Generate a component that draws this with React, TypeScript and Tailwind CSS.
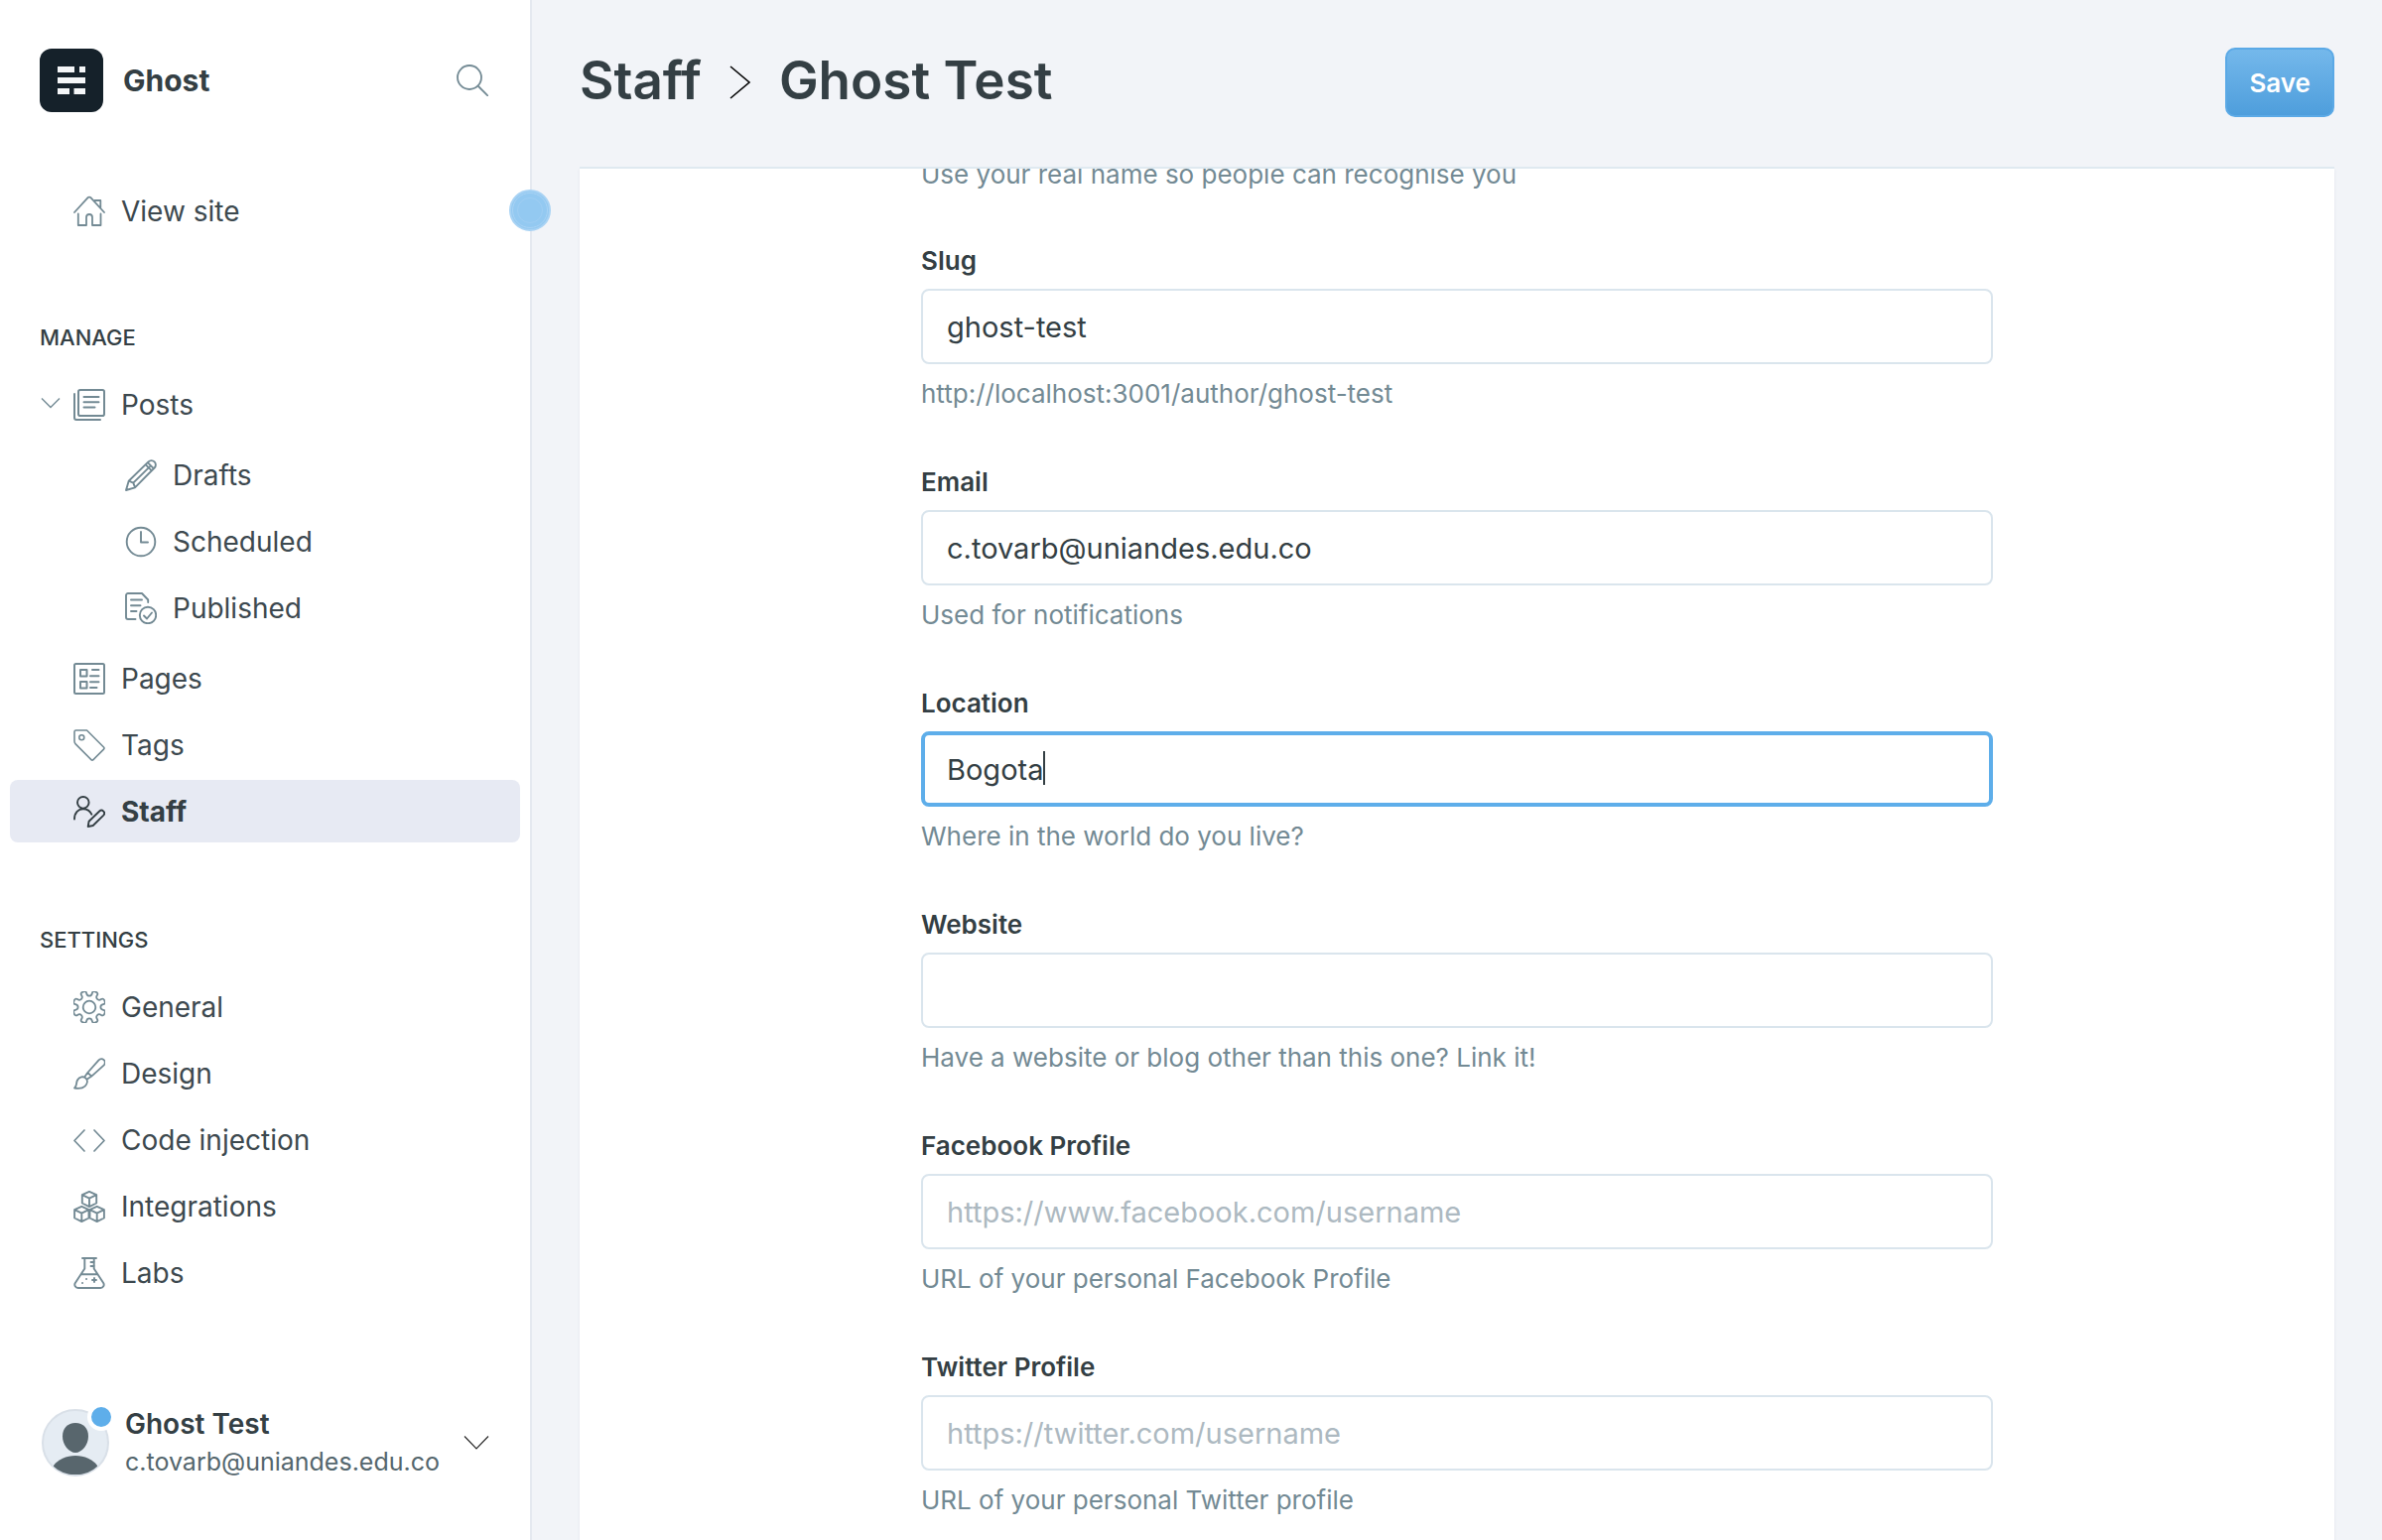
import React from "react";

type IconProps = { children: React.ReactNode; className?: string; width?: number };

function Icon({ children, className = "", width = 2 }: IconProps) {
  return (
    <svg
      viewBox="0 0 32 32"
      fill="none"
      stroke="currentColor"
      strokeWidth={width}
      strokeLinecap="round"
      strokeLinejoin="round"
      aria-hidden="true"
      className={`size-8 shrink-0 ${className}`}
    >
      {children}
    </svg>
  );
}

/** Closed, smoothed outline of an eight-toothed gear centred on 16,16. */
function gearPath() {
  const pts: [number, number][] = [];
  for (let i = 0; i < 8; i++) {
    const a = 22.5 + i * 45;
    for (const [off, r] of [[-11, 11.6], [-11, 17], [11, 17], [11, 11.6]] as const) {
      const t = ((a + off) * Math.PI) / 180;
      pts.push([16 + r * Math.cos(t), 16 + r * Math.sin(t)]);
    }
  }
  const mid = (p: [number, number], q: [number, number]) =>
    `${((p[0] + q[0]) / 2).toFixed(2)} ${((p[1] + q[1]) / 2).toFixed(2)}`;
  let d = `M${mid(pts[pts.length - 1], pts[0])}`;
  pts.forEach((p, i) => {
    d += `Q${p[0].toFixed(2)} ${p[1].toFixed(2)} ${mid(p, pts[(i + 1) % pts.length])}`;
  });
  return d + "Z";
}

const icons = {
  home: (
    <Icon width={1.8}>
      <path d="M1 17 14.600 2.200a1.900 1.900 0 0 1 2.800 0L31 17M4.800 18.500V30H13v-8a3 3 0 0 1 6 0v8h8.500V18.500M21.500 5H27.300v7.500" />
    </Icon>
  ),
  posts: (
    <Icon width={2}>
      <rect x="5" y="1" width="26" height="26" rx="1.800" />
      <path d="M1 5v24a2 2 0 0 0 2 2h24M10.500 8h15M10.500 13.300h15M10.500 18.600h11" />
    </Icon>
  ),
  drafts: (
    <Icon width={1.9}>
      <path d="M1 31l2.700-9.300L23.500 2.400a4.300 4.300 0 0 1 6.100 6.100L10 28.300zM3.700 21.700l4.600 1.900 1.700 4.700M8.300 23.600 24.800 7.400M20.600 5.200l6.200 6.200M22.800 3.200l6 6" />
    </Icon>
  ),
  scheduled: (
    <Icon width={1.9}>
      <circle cx="16" cy="16" r="14.300" />
      <path d="M16 6v10.500h7" />
    </Icon>
  ),
  published: (
    <Icon width={1.9}>
      <path d="M23.200 10V7.500L17 1H3a2 2 0 0 0-2 2v22a2 2 0 0 0 2 2h7.500M6 7.500h11M6 13.300h9.500M6 19h5.500" />
      <circle cx="23" cy="23" r="8.200" />
      <path d="m19 23.500 3 3 5-6" />
    </Icon>
  ),
  pages: (
    <Icon width={2}>
      <rect x="1" y="1" width="30" height="30" rx="1.500" />
      <path d="M7 7h6.500v6.500H7zM7 19h6.500v6.500H7zM19 7h6.500M17 13.300h8.500M17 19.300h8.500M17 25h6.500" />
    </Icon>
  ),
  tags: (
    <Icon width={1.6}>
      <path d="M2.500 1h11l17 17a1.500 1.500 0 0 1 0 2.100L20 30.600a1.500 1.500 0 0 1-2.100 0L2.200 14.900A4 4 0 0 1 1 12V2.500A1.500 1.500 0 0 1 2.500 1z" />
      <circle cx="8.300" cy="8.300" r="2.500" />
    </Icon>
  ),
  staff: (
    <Icon width={1.9}>
      <circle cx="9.800" cy="6.800" r="5.800" />
      <path d="M1 23.500C1 17 5 13.200 9.800 13.200c3.700 0 7 2.100 8.500 5.500M14.700 31l.9-5.300L26.200 15.500a2.900 2.900 0 0 1 4.100 4.100L19.700 30z" />
    </Icon>
  ),
  general: (
    <Icon width={1.8}>
      <path d={gearPath()} />
      <circle cx="16" cy="16" r="6.300" />
    </Icon>
  ),
  design: (
    <Icon width={1.8}>
      <path d="M1 30.500c2.800-1.800 1.300-4.500 3-8 1.800-3.600 6.200-4.300 8.700-1.700 2 2.300 1.300 5.500-1 7.800-2.600 2.400-6.200 2.700-10.700 1.900zM11.300 19.300l3-4.300L25.500 2.300a3.600 3.600 0 0 1 5.300 5L18.300 18.600l-4.300 3M14.300 15l4 3.600" />
    </Icon>
  ),
  code: (
    <Icon width={1.7}>
      <path d="M11 6 1 16.500 11 27M21 6l10 10.500L21 27" />
    </Icon>
  ),
  integrations: (
    <Icon width={1.9}>
      {[[16, 8.5], [8.3, 23.5], [23.7, 23.5]].map(([x, y]) => (
        <path
          key={x}
          transform={`translate(${x} ${y})`}
          d="M0-7.600 7.200-4.300V4L0 7.600-7.200 4v-8.300zM-7.200-4.300 0-.8l7.200-3.500M0-.8v8.400"
        />
      ))}
    </Icon>
  ),
  labs: (
    <Icon width={1.9}>
      <path d="M9 1h14M11.300 1v10.500L1.800 26a3.300 3.300 0 0 0 2.800 5h22.800a3.300 3.300 0 0 0 2.800-5l-9.500-14.500V1M8 17.300h16M17.500 5h3.500M17.500 9h3.500M21 21v4M19 23h4M13 22h.1M9 26h.1" />
    </Icon>
  ),
};

function NavItem({ icon, label, active, nested, arrow }: {
  icon: React.ReactNode;
  label: string;
  active?: boolean;
  nested?: boolean;
  arrow?: boolean;
}) {
  return (
    <li className="relative">
      {arrow && (
        <button type="button" aria-label="Collapse posts" className="absolute top-6 left-[31px] text-[#738a94]">
          <svg viewBox="0 0 20 12" fill="none" stroke="currentColor" strokeWidth="1.400" className="h-3 w-5">
            <path d="M1 1.500l9 9 9-9" />
          </svg>
        </button>
      )}
      <a
        href="#"
        aria-current={active ? "page" : undefined}
        className={`flex h-[63px] items-center gap-4 rounded-lg text-[28px] ${nested ? "pl-[116px]" : "pl-16"} ${
          active ? "bg-[#e7eaf3] font-bold text-[#343f44]" : "text-[#3d494f]"
        }`}
      >
        <span className={active ? "text-[#343f44]" : "text-[#738a94]"}>{icon}</span>
        {label}
      </a>
    </li>
  );
}

function Field({ id, label, hint, value, placeholder, focused }: {
  id: string;
  label: string;
  hint: string;
  value?: string;
  placeholder?: string;
  focused?: boolean;
}) {
  return (
    <div className="flex flex-col">
      <label htmlFor={id} className="mb-2.5 text-[26px] leading-9 font-semibold text-[#343f44]">
        {label}
      </label>
      <div className="relative">
        <input
          id={id}
          type="text"
          defaultValue={value}
          placeholder={placeholder}
          aria-describedby={`${id}-hint`}
          className={`block h-[76px] w-full rounded-lg bg-white text-[29px] text-[#343f44] outline-none placeholder:text-[#adb9c1] ${
            focused ? "border-4 border-[#5eaeea] px-[22px]" : "border-2 border-[#dae5ed] px-6"
          }`}
        />
        {focused && <span className="absolute top-5 left-[123px] h-[34px] w-0.5 bg-[#343f44]" />}
      </div>
      <p id={`${id}-hint`} className="mt-3 text-[26px] leading-9 text-[#738a94]">
        {hint}
      </p>
    </div>
  );
}

const fields = [
  { id: "slug", label: "Slug", value: "ghost-test", hint: "http://localhost:3001/author/ghost-test" },
  { id: "email", label: "Email", value: "c.tovarb@uniandes.edu.co", hint: "Used for notifications" },
  { id: "location", label: "Location", value: "Bogota", hint: "Where in the world do you live?", focused: true },
  { id: "website", label: "Website", hint: "Have a website or blog other than this one? Link it!" },
  { id: "facebook", label: "Facebook Profile", placeholder: "https://www.facebook.com/username", hint: "URL of your personal Facebook Profile" },
  { id: "twitter", label: "Twitter Profile", placeholder: "https://twitter.com/username", hint: "URL of your personal Twitter profile" },
];

function Sidebar() {
  return (
    <aside className="relative flex w-[536px] shrink-0 flex-col border-r-2 border-[#e5e9f0] bg-white">
      <header className="flex items-center pt-[49px] pr-[42px] pl-10">
        <svg viewBox="0 0 64 64" className="size-16" aria-hidden="true">
          <rect width="64" height="64" rx="12" fill="#15212a" />
          <path fill="#f4f6f8" d="M18 18h17v6H18zM40 18h6v6h-6zM18 29h28v6H18zM18 40h12v6H18zM34.500 40H46v6H34.500z" />
        </svg>
        <span className="ml-5 text-[30px] font-bold text-[#343f44]">Ghost</span>
        <button type="button" aria-label="Search" className="ml-auto text-[#738a94]">
          <Icon width={1.8}>
            <circle cx="13" cy="13" r="12" />
            <path d="m22 22 9.500 9.500" />
          </Icon>
        </button>
      </header>

      <nav className="px-2.5 pt-[68px]">
        <ul>
          <NavItem icon={icons.home} label="View site" />
        </ul>
        <h2 className="mt-20 px-[30px] text-[22px] leading-8 font-medium text-[#343f44]">MANAGE</h2>
        <ul className="mt-5 flex flex-col gap-1">
          <NavItem icon={icons.posts} label="Posts" arrow />
          <li className="py-1">
            <ul className="flex flex-col gap-1">
              <NavItem icon={icons.drafts} label="Drafts" nested />
              <NavItem icon={icons.scheduled} label="Scheduled" nested />
              <NavItem icon={icons.published} label="Published" nested />
            </ul>
          </li>
          <NavItem icon={icons.pages} label="Pages" />
          <NavItem icon={icons.tags} label="Tags" />
          <NavItem icon={icons.staff} label="Staff" active />
        </ul>
        <h2 className="mt-[82px] px-[30px] text-[22px] leading-8 font-medium text-[#343f44]">SETTINGS</h2>
        <ul className="mt-5 flex flex-col gap-1">
          <NavItem icon={icons.general} label="General" />
          <NavItem icon={icons.design} label="Design" />
          <NavItem icon={icons.code} label="Code injection" />
          <NavItem icon={icons.integrations} label="Integrations" />
          <NavItem icon={icons.labs} label="Labs" />
        </ul>
      </nav>

      <button type="button" className="mt-auto mb-[60px] flex items-center pr-[41px] pl-[42px] text-left">
        <span className="relative">
          <svg viewBox="0 0 68 68" className="size-[68px]" aria-hidden="true">
            <defs>
              <clipPath id="avatar-clip">
                <circle cx="34" cy="34" r="32.500" />
              </clipPath>
            </defs>
            <circle cx="34" cy="34" r="33" fill="#e5ecf3" stroke="#d9e0e8" strokeWidth="2" />
            <g fill="#58666d" clipPath="url(#avatar-clip)">
              <path d="M34 14c8 0 13 5.500 13 13.500C47 36 40.500 44 34 44s-13-8-13-16.500C21 19.500 26 14 34 14z" />
              <path d="M12 57c4-6 13-10 22-10s18 4 22 10v9H12z" />
            </g>
          </svg>
          <span className="absolute -top-1.5 -right-1.5 size-7 rounded-full border-4 border-white bg-[#5eaeea]" />
        </span>
        <span className="ml-4 flex flex-col">
          <span className="text-[28px] leading-[38px] font-semibold text-[#343f44]">Ghost Test</span>
          <span className="text-[25px] leading-[38px] text-[#54666d]">c.tovarb@uniandes.edu.co</span>
        </span>
        <svg viewBox="0 0 26 16" fill="none" stroke="#222" strokeWidth="1.100" className="ml-auto h-4 w-[26px]" aria-hidden="true">
          <path d="M1 1.500l12 12.500L25 1.500" />
        </svg>
      </button>

      <span className="absolute top-[191px] -right-[21px] z-10 flex size-[42px] items-center justify-center rounded-full border-2 border-[#a9d3f4] bg-[#93c9f1]">
        <span className="size-[36px] rounded-full border border-[#a9d3f4] p-1">
          <span className="block size-full rounded-full border border-[#9fcef3]" />
        </span>
      </span>
    </aside>
  );
}

export default function App() {
  return (
    <div className="flex h-screen overflow-hidden bg-[#f2f4f8] font-['Inter','Liberation_Sans',sans-serif]">
      <Sidebar />
      <main className="flex min-w-0 flex-1 flex-col px-12">
        <header className="flex h-[168px] shrink-0 items-start justify-between pt-12">
          <h1 className="flex items-center text-[53px] leading-[66px] font-semibold text-[#343f44]">
            <a href="#">Staff</a>
            <svg viewBox="0 0 22 34" fill="none" stroke="#000" strokeWidth="1.600" className="mx-7 mt-1 h-[34px] w-[22px]" aria-hidden="true">
              <path d="M1 1l19 16L1 33" />
            </svg>
            Ghost Test
          </h1>
          <button
            type="button"
            className="h-[70px] rounded-[10px] border-2 border-[#5ba9e6] bg-linear-to-b from-[#74b8eb] to-[#4e9edc] px-[22px] text-[26px] font-semibold text-white"
          >
            Save
          </button>
        </header>

        <section className="min-h-0 flex-1 overflow-hidden border-t-2 border-[#dfe9f0] bg-white shadow-[0_3px_3px_0_#dfe3eb]">
          <form className="mx-auto -mt-2.5 flex w-[1080px] max-w-full flex-col gap-[53px]">
            <p className="text-[26px] leading-8 text-[#738a94]">Use your real name so people can recognise you</p>
            {fields.map((f) => (
              <Field key={f.id} {...f} />
            ))}
          </form>
        </section>
      </main>
    </div>
  );
}
